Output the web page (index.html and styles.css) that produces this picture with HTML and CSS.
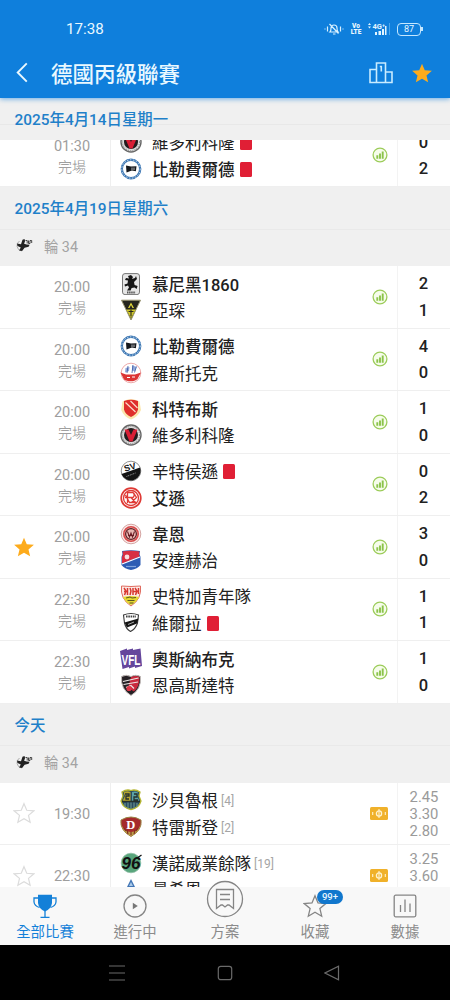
FILE: index.html
```html
<!DOCTYPE html>
<html lang="zh-Hant">
<head>
    <meta charset="UTF-8">
    <meta name="viewport" content="width=device-width, initial-scale=1.0">
    <title>德國丙級聯賽</title>
    <link rel="stylesheet" href="styles.css">
</head>
<body>
    <!-- Shared icons and club crests -->
    <svg class="sprite" aria-hidden="true">
        <symbol id="star" viewBox="0 0 24 24">
            <path d="M12 1.8l3 7.2 7.8.6-5.9 5 1.8 7.6-6.7-4-6.7 4 1.8-7.6-5.9-5L9 9z"/>
        </symbol>
        <symbol id="stats" viewBox="0 0 16 16">
            <circle cx="8" cy="8" r="6.9" fill="#f6fceb" stroke="#9ccc5a" stroke-width="1.3"/>
            <path d="M5.3 8.2v3.6M8 6.4v5.4M10.7 4.4v7.4" stroke="#8bc34a" stroke-width="1.9"/>
        </symbol>
        <symbol id="odds" viewBox="0 0 18 13">
            <rect width="18" height="13" rx="1.5" fill="#f0b12a"/>
            <circle cx="9" cy="6.5" r="2.6" fill="none" stroke="#fff3d0" stroke-width="1.3"/>
            <path d="M9 2v9M2.7 5v3M15.3 5v3" stroke="#fff3d0" stroke-width="1.1"/>
        </symbol>
        <symbol id="league" viewBox="0 0 18 14">
            <path d="M4.500 3a5.500 5.500 0 0 0 2 10" fill="none" stroke="#aaa" stroke-width="1"/>
            <path d="M2 5.500l4 .8 1.500-4.500L9.500 1l.6 2-1 2.800 2.500.6 3 .3-1 2-4 1-2.500 3.300-3-.5 1.700-3L2.500 8z" fill="#222"/>
            <path d="M10.500 2.500h1.700v3M13.500 2.500v3h1.500v-3h1.700v2.500" fill="none" stroke="#444" stroke-width="1"/>
        </symbol>

        <symbol id="viktoria" viewBox="0 0 22 22">
            <circle cx="11" cy="11" r="10" fill="#ddd" stroke="#666" stroke-width="1.4"/>
            <circle cx="11" cy="11" r="8.6" fill="none" stroke="#999" stroke-width="1.2" stroke-dasharray="1 1.2"/>
            <circle cx="11" cy="11" r="7" fill="#221c1e"/>
            <path d="M4.500 5.500h4L11 11l2.500-5.500h4L12.500 17.500h-3z" fill="#d81e35"/>
        </symbol>
        <symbol id="bielefeld" viewBox="0 0 22 22">
            <circle cx="11" cy="11" r="9.2" fill="#fff" stroke="#3e78b4" stroke-width="2.4"/>
            <circle cx="11" cy="11" r="9.2" fill="none" stroke="#cfe0f0" stroke-width="1" stroke-dasharray="1.4 1.6"/>
            <path d="M6 7.5l5 1 5.5-.3-.6 5-4-.7-5.4 2z" fill="#15181d"/>
            <path d="M12 9.5v2.5M14 9.5v2.5" stroke="#fff" stroke-width=".7"/>
        </symbol>
        <symbol id="munich" viewBox="0 0 22 22">
            <rect x="2.5" y=".6" width="17" height="21" rx="2.5" fill="#e6e6e6" stroke="#777"/>
            <path d="M8 3l3-1 2 2-1 2 3-1 1-2 1 3-3 3 .6 3 3 1-1 3-2-1.500-3 .5-1 2.500H7l2-3-1-2-3 1-.5-2 3-1L8 7.600 5 7l1-2 3 .6z" fill="#161616"/>
            <path d="M7 19.5h8.5" stroke="#555" stroke-width="1.8" stroke-dasharray="1.5 .6"/>
        </symbol>
        <symbol id="aachen" viewBox="0 0 22 22">
            <path d="M1.5 1.2h19L11 21z" fill="#25251d" stroke="#9a9670" stroke-width="1"/>
            <path d="M6.3 10.5h9.4L11 19.5z" fill="#cfc72d"/>
            <path d="M11 3.5l3 5.5h-1.5L11 6 9.500 9H8z" fill="#e2d93a"/>
            <path d="M11 10.500v7M8.500 12.500h5" stroke="#25251d" stroke-width="1.1"/>
        </symbol>
        <symbol id="rostock" viewBox="0 0 22 22">
            <circle cx="11" cy="11" r="9.8" fill="#fff" stroke="#eba0a0" stroke-width=".9"/>
            <path d="M.5 10.500l5.500 2h9l6-2-3.500 6.500c-3 3-10 3-13.500.5z" fill="#dc3434"/>
            <path d="M5.500 6l4-1-.5 4-4 1.500zM12 3.500l4.500 1.200-1.500 4.500-3-.7z" fill="#93a7d8"/>
            <path d="M8 4l-1 7M13 3l-1 8M16.500 4.500l-2 6" stroke="#3959a5" stroke-width=".8"/>
            <path d="M7 15.500h3M12 15h3" stroke="#fff" stroke-width="1.2"/>
        </symbol>
        <symbol id="cottbus" viewBox="0 0 22 22">
            <path d="M2.500 3.500Q11-1.500 19.500 3.500L21 12q-3 7-10 9.500Q4 19 1.200 12z" fill="#fbe7ae"/>
            <path d="M4 3q7-2.500 14 0v8.500q-1 4.500-7 7.500Q5 16 4 11.500z" fill="#df2f2b"/>
            <path d="M5.500 4.500l10 9.500M10.500 3l7 7" stroke="#fbd9c8" stroke-width="1.2"/>
        </symbol>
        <symbol id="sandhausen" viewBox="0 0 22 22">
            <circle cx="11" cy="11" r="9.800" fill="#fff" stroke="#777" stroke-width=".8"/>
            <path d="M1.500 14L20 7.500A9.800 9.800 0 0 1 1.500 14z" fill="#141414"/>
            <text x="4.500" y="10.500" font-size="9" transform="rotate(-16 9 9)" class="crest-text">SV</text>
            <path d="M6.500 16.500l9-3.500" stroke="#aaa" stroke-width=".9" stroke-dasharray="1 .8"/>
        </symbol>
        <symbol id="essen" viewBox="0 0 22 22">
            <circle cx="11" cy="11" r="9.800" fill="#fff" stroke="#df3a35" stroke-width="1.700"/>
            <circle cx="11" cy="11" r="7.500" fill="none" stroke="#df3a35" stroke-width="1.300"/>
            <path d="M7.500 16V5.500h5.500q2.500 2.500 0 5H5M11 10.500l5 5.500M5.500 8l4 7.500h7M14 6.500l2.500 4-5 5" fill="none" stroke="#df3a35" stroke-width="1.300"/>
        </symbol>
        <symbol id="wehen" viewBox="0 0 22 22">
            <circle cx="11" cy="11" r="9.800" fill="#fbeceb" stroke="#d5a5a3" stroke-width="1"/>
            <circle cx="11" cy="11" r="7.200" fill="#f0b5b0" stroke="#d84a4a" stroke-width="1.600"/>
            <circle cx="11" cy="11" r="5.400" fill="#e9b9b4" stroke="#5a1d22" stroke-width="1.200"/>
            <path d="M7.500 8.500L9.500 14 11 10l1.500 4 2-5.500M8 12.500h6" fill="none" stroke="#6c1d25" stroke-width="1.100"/>
        </symbol>
        <symbol id="haching" viewBox="0 0 22 22">
            <path d="M2 2q9-1.500 18 0l-.5 3 1 3v8q-3 4-9.500 5-6.500-1-9.500-5V8l1-3z" fill="#2c5cb4"/>
            <path d="M2.500 2.500q8.500-1.500 17 0l-.5 3.500 1 1.500L2 14.500V8l1-2.500z" fill="#d82e43"/>
            <path d="M2 15L20 8" stroke="#fff" stroke-width="1.100"/>
            <circle cx="7" cy="8" r="2.400" fill="#f7dfe2"/>
            <path d="M6 17.500h10" stroke="#7fa2dc" stroke-width="1.200"/>
        </symbol>
        <symbol id="stuttgart" viewBox="0 0 22 22">
            <path d="M1.500 1q9.500 1 19 0 1.500 13-9.500 20Q0 14 1.500 1z" fill="#fde9e4" stroke="#df6c60" stroke-width="1"/>
            <path d="M3 12q8-2 16 0-2 5-8 8-6-3-8-8z" fill="#e4d832"/>
            <path d="M4 3l2 3-1.500 4M7.500 3v7M10 3l1 3-1 4M13 3v7M15 3l2 3-1.500 4M18.500 3v6M4 6.500h4M13 6.500h5" fill="none" stroke="#d8372f" stroke-width="1.500"/>
            <path d="M6 13l4-1 2 1 4-.5M7.500 15.500h7M9.500 18h4" stroke="#5b5720" stroke-width="1" fill="none"/>
        </symbol>
        <symbol id="verl" viewBox="0 0 22 22">
            <path d="M3.500 3q7.500-3 15 0l-1 8q-2 6-7 8.500Q6 17 4.500 11z" fill="#fff" stroke="#3a3a3a" stroke-width="1.100"/>
            <path d="M4.500 10.500L18.500 6.500 17 11.500l-10 4z" fill="#151515"/>
            <path d="M6 4.500h10" stroke="#444" stroke-width="1.800" stroke-dasharray="1.600 .7"/>
            <path d="M8 12.500l6-2.500" stroke="#bbb" stroke-width=".9"/>
        </symbol>
        <symbol id="osnabrueck" viewBox="0 0 22 22">
            <path d="M0 3l7-2.500V2l6-1.500V2l7.500-1.500L22 18l-7 2v-1.500L9 20.500V19l-6.500 2z" fill="#65469c"/>
            <text x="1.500" y="16.500" font-size="15" textLength="19" lengthAdjust="spacingAndGlyphs" class="crest-text white">VFL</text>
        </symbol>
        <symbol id="ingolstadt" viewBox="0 0 22 22">
            <path d="M1.500 2.500Q6 0 11 2.500 16 0 20.500 2.500q1 13-9.500 19-10.500-6-9.500-19z" fill="#262125" stroke="#c3bbb9" stroke-width="1"/>
            <path d="M11 3q5-2 8.500 0 0 10-5.500 14.500L8 14z" fill="#c92a3d"/>
            <path d="M3 7.500L18.500 4M3.500 10.500L18 8M6 13.500l5-2 3 3" fill="none" stroke="#ece5e4" stroke-width="1.200"/>
            <circle cx="9" cy="14.500" r="2.600" fill="#df3547"/>
        </symbol>
        <symbol id="saarbruecken" viewBox="0 0 22 22">
            <path d="M2 3q4.500-3 9-1.500Q15.500 0 20 3l-1 4 2 5q-2 7-10 8.500Q3 19 1 12l2-5z" fill="#294b62" stroke="#b5b52e" stroke-width="1.300"/>
            <path d="M3.500 3.500Q7 1.500 10.500 3v9h-8L5 7z" fill="#b7a52c"/>
            <path d="M12 3q3.500-1 6 .5L17.500 8l2 4H12z" fill="#5aa1a4"/>
            <path d="M5 5h4v2H6v3h3M14 5h3v3h-3v3h4M2 12.500h18" fill="none" stroke="#26312d" stroke-width="1.300"/>
            <path d="M5 14v4M8 13.500v6M11 13.500V20M14 13.500v6M17 14v4" stroke="#68908c" stroke-width="1.200"/>
        </symbol>
        <symbol id="dresden" viewBox="0 0 22 22">
            <path d="M1 4q10-6 20 0 1.500 10-10 16.500Q-.5 14 1 4z" fill="#a52a2c" stroke="#998545" stroke-width="1"/>
            <path d="M1.500 9q2.500 7 9.500 7t9.500-7q-1 7-9.500 11Q2.500 16 1.500 9z" fill="#bda049"/>
            <path d="M4 12l2 3M7 14l1 4M11 16v3M15 14l-1 4M18 12l-2 3" stroke="#802d22" stroke-width="1.100"/>
            <text x="6.300" y="12.500" font-size="12.500" class="crest-text serif white">D</text>
        </symbol>
        <symbol id="hannover" viewBox="0 0 22 22">
            <circle cx="11" cy="11" r="9.800" fill="#58a57c" stroke="#8ebea4" stroke-width=".8"/>
            <text x="1.500" y="16.800" font-size="17" textLength="19" lengthAdjust="spacingAndGlyphs" class="crest-text italic">96</text>
            <path d="M18 5.500l3.500-2.500" stroke="#111" stroke-width="1.300"/>
        </symbol>
        <symbol id="ahead" viewBox="0 0 22 22">
            <path d="M11 1l9 18-5-3-4 4-4-4-5 3z" fill="#4275b5"/>
            <path d="M11 4l2 4h-4zM8.500 9.500h5L15 14H7z" fill="#a9c9e8"/>
        </symbol>
    </svg>

    <header class="app-header">
        <div class="status-bar">
            <span class="clock">17:38</span>
            <div class="status-icons">
                <svg class="mute" viewBox="0 0 20 14">
                    <path d="M6 10c1-1 1-2 1-4a3 3 0 0 1 6 0c0 2 0 3 1 4zM9 12h2.500M5.500 2l9 9.500M3.500 4.500v5M16.500 4.500v5"/>
                    <path d="M.5 7h1M18.500 7h1"/>
                </svg>
                <div class="volte"><span>Vo</span><span>LTE</span></div>
                <svg class="signal" viewBox="0 0 24 14">
                    <path class="fill" d="M1 3l1.500-2L4 3zM1 4.500h3l-1.500 2zM8 10h2v3H8zM11.500 9h2.500v4h-2.500zM15 7h2v6h-2zM18 4h1.500v9H18z"/>
                    <path class="dim" d="M22.500 1v12"/>
                    <text x="5.500" y="6.500">4G⁺</text>
                </svg>
                <div class="battery">87</div>
            </div>
        </div>
        <div class="title-bar">
            <svg class="back" viewBox="0 0 12 22"><path d="M11 1.500L1.500 11l9.500 9.500"/></svg>
            <h1>德國丙級聯賽</h1>
            <svg class="podium" viewBox="0 0 24 22">
                <path d="M7.500 20.500V1h9v19.500M7.500 7.500H1v13h22V10h-6.500M10.800 4.500h1.500v5"/>
            </svg>
            <svg class="star on"><use href="#star"/></svg>
        </div>
    </header>

    <div class="date-header sticky">2025年4月14日星期一</div>

    <main class="match-list">
        <div class="match clipped">
            <div class="fav"></div>
            <div class="time"><span>01:30</span><span>完場</span></div>
            <div class="teams">
                <div class="team"><svg><use href="#viktoria"/></svg>維多利科隆<i class="red-card"></i></div>
                <div class="team win"><svg><use href="#bielefeld"/></svg>比勒費爾德<i class="red-card"></i></div>
            </div>
            <svg class="stats"><use href="#stats"/></svg>
            <div class="score"><span>0</span><span>2</span></div>
        </div>

        <div class="date-header">2025年4月19日星期六</div>
        <div class="round"><svg><use href="#league"/></svg>輪 34</div>

        <div class="match">
            <div class="fav"></div>
            <div class="time"><span>20:00</span><span>完場</span></div>
            <div class="teams">
                <div class="team win"><svg><use href="#munich"/></svg>慕尼黑1860</div>
                <div class="team"><svg><use href="#aachen"/></svg>亞琛</div>
            </div>
            <svg class="stats"><use href="#stats"/></svg>
            <div class="score"><span>2</span><span>1</span></div>
        </div>
        <div class="match">
            <div class="fav"></div>
            <div class="time"><span>20:00</span><span>完場</span></div>
            <div class="teams">
                <div class="team win"><svg><use href="#bielefeld"/></svg>比勒費爾德</div>
                <div class="team"><svg><use href="#rostock"/></svg>羅斯托克</div>
            </div>
            <svg class="stats"><use href="#stats"/></svg>
            <div class="score"><span>4</span><span>0</span></div>
        </div>
        <div class="match">
            <div class="fav"></div>
            <div class="time"><span>20:00</span><span>完場</span></div>
            <div class="teams">
                <div class="team win"><svg><use href="#cottbus"/></svg>科特布斯</div>
                <div class="team"><svg><use href="#viktoria"/></svg>維多利科隆</div>
            </div>
            <svg class="stats"><use href="#stats"/></svg>
            <div class="score"><span>1</span><span>0</span></div>
        </div>
        <div class="match">
            <div class="fav"></div>
            <div class="time"><span>20:00</span><span>完場</span></div>
            <div class="teams">
                <div class="team"><svg><use href="#sandhausen"/></svg>辛特侯遜<i class="red-card"></i></div>
                <div class="team win"><svg><use href="#essen"/></svg>艾遜</div>
            </div>
            <svg class="stats"><use href="#stats"/></svg>
            <div class="score"><span>0</span><span>2</span></div>
        </div>
        <div class="match">
            <div class="fav"><svg class="star on"><use href="#star"/></svg></div>
            <div class="time"><span>20:00</span><span>完場</span></div>
            <div class="teams">
                <div class="team win"><svg><use href="#wehen"/></svg>韋恩</div>
                <div class="team"><svg><use href="#haching"/></svg>安達赫治</div>
            </div>
            <svg class="stats"><use href="#stats"/></svg>
            <div class="score"><span>3</span><span>0</span></div>
        </div>
        <div class="match">
            <div class="fav"></div>
            <div class="time"><span>22:30</span><span>完場</span></div>
            <div class="teams">
                <div class="team"><svg><use href="#stuttgart"/></svg>史特加青年隊</div>
                <div class="team"><svg><use href="#verl"/></svg>維爾拉<i class="red-card"></i></div>
            </div>
            <svg class="stats"><use href="#stats"/></svg>
            <div class="score"><span>1</span><span>1</span></div>
        </div>
        <div class="match">
            <div class="fav"></div>
            <div class="time"><span>22:30</span><span>完場</span></div>
            <div class="teams">
                <div class="team win"><svg><use href="#osnabrueck"/></svg>奧斯納布克</div>
                <div class="team"><svg><use href="#ingolstadt"/></svg>恩高斯達特</div>
            </div>
            <svg class="stats"><use href="#stats"/></svg>
            <div class="score"><span>1</span><span>0</span></div>
        </div>

        <div class="date-header">今天</div>
        <div class="round"><svg><use href="#league"/></svg>輪 34</div>

        <div class="match">
            <div class="fav"><svg class="star"><use href="#star"/></svg></div>
            <div class="time"><span>19:30</span></div>
            <div class="teams">
                <div class="team"><svg><use href="#saarbruecken"/></svg>沙貝魯根<small>[4]</small></div>
                <div class="team"><svg><use href="#dresden"/></svg>特雷斯登<small>[2]</small></div>
            </div>
            <svg class="odds-icon"><use href="#odds"/></svg>
            <div class="odds"><span>2.45</span><span>3.30</span><span>2.80</span></div>
        </div>
        <div class="match">
            <div class="fav"><svg class="star"><use href="#star"/></svg></div>
            <div class="time"><span>22:30</span></div>
            <div class="teams">
                <div class="team"><svg><use href="#hannover"/></svg>漢諾威業餘隊<small>[19]</small></div>
                <div class="team"><svg><use href="#ahead"/></svg>曼希恩</div>
            </div>
            <svg class="odds-icon"><use href="#odds"/></svg>
            <div class="odds"><span>3.25</span><span>3.60</span></div>
        </div>
    </main>

    <nav class="tab-bar">
        <a class="tab active">
            <svg viewBox="0 0 24 24">
                <path class="solid" d="M5 .8h14V9q-.8 6-7 8.500Q5.800 15 5 9z"/>
                <path d="M5 4H1v4q.5 4 5.500 5.500M19 4h4v4q-.5 4-5.500 5.500M12 17v6M7.500 23.300h9"/>
            </svg>
            <span>全部比賽</span>
        </a>
        <a class="tab">
            <svg viewBox="0 0 24 24">
                <circle cx="12" cy="12" r="11"/>
                <path class="solid" d="M9.800 8.800l5 3.200-5 3.200z"/>
            </svg>
            <span>進行中</span>
        </a>
        <a class="tab center">
            <svg viewBox="0 0 38 38">
                <circle cx="19" cy="19" r="17.500"/>
                <path d="M10.500 9.500h17v19l-4.500-3.500h-1.500L19 27l-2.500-2h-1.500l-4.500 3.500zM14 14.500h10M14 19.500h10"/>
            </svg>
            <span>方案</span>
        </a>
        <a class="tab">
            <svg viewBox="0 0 24 24">
                <path d="M12 1.800l3 7.200 7.800.6-5.900 5 1.800 7.600-6.700-4-6.700 4 1.800-7.600-5.900-5L9 9z"/>
            </svg>
            <b class="badge">99+</b>
            <span>收藏</span>
        </a>
        <a class="tab">
            <svg viewBox="0 0 24 24">
                <rect x="1.200" y="1.200" width="21.600" height="21.600" rx="1.500"/>
                <path d="M7.500 11v7M12 5.500V18M17 9.500V18"/>
            </svg>
            <span>數據</span>
        </a>
    </nav>

    <footer class="system-bar">
        <svg viewBox="0 0 16 16"><path d="M0 1h16M0 8h16M0 15h16"/></svg>
        <svg viewBox="0 0 16 16"><rect x="1.300" y="1.300" width="13.400" height="13.400" rx="2.500"/></svg>
        <svg viewBox="0 0 16 16"><path d="M14.500 1.200v13.600L1 8z"/></svg>
    </footer>
</body>
</html>
```
FILE: styles.css
```css
* {
    margin: 0;
    padding: 0;
    box-sizing: border-box;
}

body {
    font-family: Roboto, 'Noto Sans CJK TC', sans-serif;
    width: 450px;
    height: 1000px;
    margin: 0 auto;
    background: #fff;
    color: #212121;
    display: flex;
    flex-direction: column;
    overflow: hidden;
}

svg {
    display: block;
    flex: none;
}

.sprite {
    position: absolute;
    width: 0;
    height: 0;
}

/* Header */
.app-header {
    flex: none;
    height: 98px;
    background: #0f7fdc;
    color: #e9f8ff;
    box-shadow: 0 1px 5px rgba(15, 127, 220, 0.6);
    position: relative;
    z-index: 2;
}

.status-bar {
    height: 50px;
    padding: 8px 28px 0 66px;
    display: flex;
    align-items: center;
    justify-content: space-between;
}

.clock {
    font-size: 15.2px;
}

.status-icons {
    display: flex;
    align-items: center;
}

.mute {
    width: 20px;
    height: 14px;
    margin-right: 7px;
    fill: none;
    stroke: #d9f1ff;
    stroke-width: 1.2;
}

.volte {
    display: flex;
    flex-direction: column;
    align-items: center;
    width: 10px;
    margin-right: 6px;
    font-size: 6.5px;
    line-height: 6.5px;
    font-weight: 900;
}

.signal {
    width: 24px;
    height: 14px;
    margin-right: 6px;
}

.signal .fill,
.signal text {
    fill: #e2f5ff;
}

.signal text {
    font-size: 7.5px;
    font-weight: 700;
}

.signal .dim {
    stroke: #4ba3e8;
}

.battery {
    width: 24px;
    height: 13px;
    margin-right: 1px;
    border: 1.5px solid #c4e7ff;
    border-radius: 4px;
    font-size: 9px;
    line-height: 10.5px;
    text-align: center;
    position: relative;
}

.battery::after {
    content: "";
    position: absolute;
    right: -3px;
    top: 3px;
    width: 2px;
    height: 4px;
    background: #c4e7ff;
}

.title-bar {
    height: 48px;
    padding: 0 17px 3px 16px;
    display: flex;
    align-items: center;
}

.back {
    width: 12px;
    height: 21px;
    margin-right: 23px;
    fill: none;
    stroke: #e9f8ff;
    stroke-width: 2;
}

.title-bar h1 {
    flex: 1;
    padding-top: 4px;
    font-size: 21.5px;
    line-height: 30px;
    font-weight: 500;
}

.podium {
    width: 24px;
    height: 22px;
    margin-right: 18px;
    fill: none;
    stroke: #c9ecff;
    stroke-width: 1.6;
}

.star {
    width: 22px;
    height: 22px;
    fill: none;
    stroke: #dcdcdc;
    stroke-width: 1.3;
}

.star.on {
    fill: #fdab1c;
    stroke: none;
}

/* Match list */
.match-list {
    flex: 1;
    min-height: 0;
    overflow: hidden;
}

.date-header {
    height: 41.5px;
    padding-left: 14.5px;
    font-size: 15.4px;
    font-weight: 500;
    line-height: 44px;
    color: #1f80c9;
    background: #f0f0f0;
}

.date-header.sticky {
    flex: none;
    background: linear-gradient(#e8e8e8, #e8e8e8) 0 26px / 100% 1px no-repeat #f0f0f0;
}

.round {
    height: 37.5px;
    padding: 0 0 5px 15px;
    display: flex;
    align-items: center;
    gap: 11px;
    font-size: 14.3px;
    color: #a3a3a3;
    background: #f0f0f0;
    border-top: 1px solid #e9e9e9;
}

.round svg {
    width: 18px;
    height: 14px;
}

.match {
    height: 62.5px;
    display: grid;
    grid-template-columns: 48px 62px 252px 35px 53px;
    align-items: center;
    border-bottom: 1px solid #efefef;
}

.match.clipped {
    margin-top: -15px;
}

.fav {
    display: flex;
    justify-content: center;
}

.time {
    width: 48px;
    padding-top: 3px;
    display: flex;
    flex-direction: column;
    align-items: center;
    font-size: 14.5px;
    line-height: 20px;
    color: #9e9e9e;
}

.time span + span {
    font-size: 14px;
    font-weight: 300;
    color: #8e8e8e;
}

.teams {
    height: 100%;
    padding: 4.5px 0 0 9px;
    border-left: 1px solid #efefef;
}

.team {
    height: 26.5px;
    padding-top: 3px;
    display: flex;
    align-items: center;
    font-size: 16.5px;
    line-height: 23px;
    white-space: nowrap;
}

.team.win {
    font-weight: 500;
}

.team svg {
    width: 22px;
    height: 22px;
    margin: -3px 10px 0 0;
}

.team small {
    margin-left: 3px;
    font-size: 12px;
    color: #a5a5a5;
}

.red-card {
    width: 12px;
    height: 15px;
    margin: -2px 0 0 5px;
    border-radius: 1.5px;
    background: #e01f35;
}

.crest-text {
    font-family: 'Liberation Sans', sans-serif;
    font-weight: 700;
    fill: #111;
}

.crest-text.serif {
    font-family: 'Liberation Serif', serif;
}

.crest-text.italic {
    font-style: italic;
}

.crest-text.white {
    fill: #fff;
}

.stats {
    width: 16px;
    height: 16px;
    margin-left: 10px;
}

.odds-icon {
    width: 18px;
    height: 13px;
    margin-left: 8px;
}

.score,
.odds {
    height: 100%;
    display: flex;
    flex-direction: column;
    align-items: center;
    border-left: 1px solid #f3f3f3;
}

.score {
    padding: 5px 1px 0 0;
    font-size: 16.5px;
    line-height: 26.5px;
    font-weight: 500;
}

.odds {
    padding-top: 6px;
    font-size: 14.8px;
    line-height: 17px;
    color: #9a9a9a;
}

/* Bottom tabs */
.tab-bar {
    flex: none;
    height: 58px;
    display: grid;
    grid-template: 58px / repeat(5, 1fr);
    background: #f8f8f8;
    position: relative;
}

.tab {
    display: flex;
    flex-direction: column;
    align-items: center;
    justify-content: flex-end;
    gap: 4px;
    padding-bottom: 2px;
    font-size: 14.4px;
    line-height: 21px;
    color: #8b8b8b;
    position: relative;
}

.tab svg {
    width: 24px;
    height: 24px;
    fill: none;
    stroke: #858585;
    stroke-width: 1.3;
}

.tab svg .solid {
    fill: #777;
    stroke: none;
}

.tab.active {
    color: #1380d8;
}

.tab.active svg {
    stroke: #1380d8;
}

.tab.active svg .solid {
    fill: #1380d8;
}

.tab.center svg {
    width: 38px;
    height: 38px;
    fill: #f8f8f8;
}

.badge {
    position: absolute;
    left: 47px;
    top: 3px;
    width: 26px;
    height: 14px;
    border-radius: 7px;
    background: #1177cd;
    color: #e9f7ff;
    font-size: 9.5px;
    line-height: 14px;
    font-weight: 500;
    text-align: center;
}

/* Android navigation */
.system-bar {
    flex: none;
    height: 55px;
    padding-left: 109px;
    display: flex;
    align-items: center;
    gap: 91.5px;
    background: #000;
}

.system-bar svg {
    width: 16px;
    height: 16px;
    fill: none;
    stroke: #6a6a6a;
    stroke-width: 1.2;
}
```
